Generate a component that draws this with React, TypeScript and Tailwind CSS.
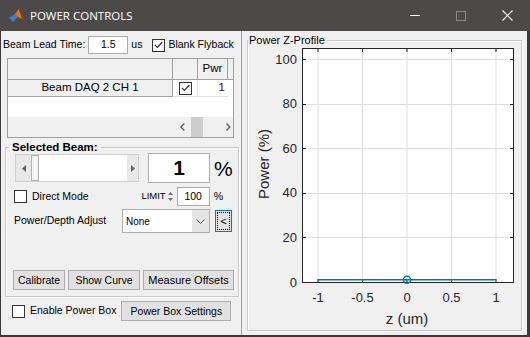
import React from 'react';

const yTicks = [0, 20, 40, 60, 80, 100];
const xTicks = [-1, -0.5, 0, 0.5, 1];
const px = (v: number) => 159 + 89 * v;
const py = (v: number) => 235 - 2.23 * v;

function Check({ checked = false }: { checked?: boolean }) {
	return (
		<span className="flex h-[13px] w-[13px] shrink-0 items-center justify-center border border-[#333333] bg-white">
			{checked && (
				<svg width="9" height="8" viewBox="0 0 9 8">
					<path d="M0.8 3.8 L3.4 6.4 L8.3 1" fill="none" stroke="#333333" strokeWidth="1.2" />
				</svg>
			)}
		</span>
	);
}

function Btn({ children, className = '' }: { children: React.ReactNode; className?: string }) {
	return (
		<button
			type="button"
			className={`flex h-[20px] items-center justify-center border border-[#adadad] bg-[#e1e1e1] text-[10.5px] leading-none text-black ${className}`}
		>
			{children}
		</button>
	);
}

function MatlabIcon() {
	return (
		<svg width="16" height="14" viewBox="0 0 16 14" className="ml-[9px]">
			<polygon points="0,9 6,5 9,8 4,13" fill="#3f7fc4" />
			<polygon points="6,5 10,0 13,10 9,8" fill="#e8761e" />
			<polygon points="10,0 16,12 13,10" fill="#b8331a" />
		</svg>
	);
}

function Plot() {
	return (
		<svg width="273" height="283" viewBox="0 0 273 283" className="block">
			<rect x="54.5" y="1.5" width="211" height="234" fill="#ffffff" />
			{xTicks.map((t) => (
				<line key={`gx${t}`} x1={px(t)} y1="1.5" x2={px(t)} y2="235.5" stroke="#dedede" strokeWidth="1" />
			))}
			{yTicks.map((t) => (
				<line key={`gy${t}`} x1="54.5" y1={Math.round(py(t)) + 0.5} x2="265.5" y2={Math.round(py(t)) + 0.5} stroke="#dedede" strokeWidth="1" />
			))}
			<rect x="54.5" y="1.5" width="211" height="234" fill="none" stroke="#262626" strokeWidth="1" />
			{xTicks.map((t) => (
				<g key={`tx${t}`}>
					<line x1={px(t)} y1="235.5" x2={px(t)} y2="232" stroke="#262626" />
					<line x1={px(t)} y1="1.5" x2={px(t)} y2="5" stroke="#262626" />
					<text x={px(t)} y="255" textAnchor="middle" fontSize="13" fill="#262626">
						{t}
					</text>
				</g>
			))}
			{yTicks.map((t) => (
				<g key={`ty${t}`}>
					<line x1="54.5" y1={Math.round(py(t)) + 0.5} x2="58" y2={Math.round(py(t)) + 0.5} stroke="#262626" />
					<line x1="265.5" y1={Math.round(py(t)) + 0.5} x2="262" y2={Math.round(py(t)) + 0.5} stroke="#262626" />
					<text x="49" y={py(t) + 4.5} textAnchor="end" fontSize="13" fill="#262626">
						{t}
					</text>
				</g>
			))}
			<line x1={px(-1)} y1={py(1)} x2={px(1)} y2={py(1)} stroke="#0072bd" strokeWidth="1.6" />
			<circle cx={px(0)} cy={py(1)} r="3.5" fill="none" stroke="#0072bd" strokeWidth="1.3" />
			<text x="159" y="277" textAnchor="middle" fontSize="15" fill="#262626">
				z (um)
			</text>
			<text x="15" y="117" textAnchor="middle" dominantBaseline="central" fontSize="15" fill="#262626" transform="rotate(-90 15 117)">
				Power (%)
			</text>
		</svg>
	);
}

export default function App() {
	return (
		<div className="flex h-[337px] w-[530px] flex-col bg-[#3a3a3a] font-['Liberation_Sans',Arial,sans-serif] text-[10.5px] text-black">
			{/* title bar */}
			<div className="flex h-[31px] shrink-0 items-center bg-[#4b4a48] text-white">
				<MatlabIcon />
				<span className="ml-[5px] font-['Open_Sans',sans-serif] text-[11.5px]">POWER CONTROLS</span>
				<div className="ml-auto flex h-full">
					<div className="flex h-full w-[46px] items-center justify-center">
						<span className="block h-px w-[10px] bg-white" />
					</div>
					<div className="flex h-full w-[46px] items-center justify-center">
						<span className="block h-[10px] w-[10px] border border-[#8a8a8a]" />
					</div>
					<div className="flex h-full w-[46px] items-center justify-center">
						<svg width="11" height="11" viewBox="0 0 11 11">
							<path d="M0.5 0.5 L10.5 10.5 M10.5 0.5 L0.5 10.5" stroke="#ffffff" strokeWidth="1.1" />
						</svg>
					</div>
				</div>
			</div>

			{/* body */}
			<div className="mb-[2px] ml-px mr-[3px] flex flex-1 bg-[#f0f0f0]">
				{/* left column */}
				<div className="flex w-[241px] shrink-0 flex-col border-r border-[#a0a0a0]">
					<div className="mt-[5px] flex h-[18px] items-center pl-[2px]">
						<span>Beam Lead Time:</span>
						<span className="ml-[3px] flex h-[18px] w-[40px] items-center justify-center border border-[#abadb3] bg-white">1.5</span>
						<span className="ml-[3px]">us</span>
						<span className="ml-[10px]">
							<Check checked />
						</span>
						<span className="ml-[3px]">Blank Flyback</span>
					</div>

					{/* table */}
					<div className="ml-[6px] mt-[4px] flex h-[80px] w-[227px] flex-col border border-[#a0a0a0] text-[11.5px]">
						<div className="flex h-[21px] border-b border-[#a0a0a0]">
							<div className="w-[165px] border-r border-[#a0a0a0]" />
							<div className="w-[25px] border-r border-[#a0a0a0]" />
							<div className="flex w-[30px] items-end justify-center border-r border-[#a0a0a0] pb-[2px]">Pwr</div>
							<div className="flex-1" />
						</div>
						<div className="flex h-[17px]">
							<div className="flex w-[165px] items-center justify-center border-b border-r border-[#a0a0a0]">Beam DAQ 2 CH 1</div>
							<div className="flex w-[25px] items-center justify-center border-b border-r border-[#e0e0e0] bg-white">
								<Check checked />
							</div>
							<div className="flex w-[30px] items-center justify-end border-b border-[#e0e0e0] bg-white pr-[3px] text-[#400040]">1</div>
							<div className="flex-1 bg-white" />
						</div>
						<div className="h-[20px] bg-white" />
						<div className="flex h-[20px] items-center">
							<div className="w-[171px]" />
							<svg width="10" height="10" viewBox="0 0 10 10" className="ml-[2px]">
								<path d="M6.5 1.5 L3 5 L6.5 8.5" fill="none" stroke="#606060" strokeWidth="1.4" />
							</svg>
							<span className="ml-[4px] block h-[20px] w-[12px] bg-[#cdcdcd]" />
							<svg width="10" height="10" viewBox="0 0 10 10" className="ml-[20px]">
								<path d="M3.5 1.5 L7 5 L3.5 8.5" fill="none" stroke="#606060" strokeWidth="1.4" />
							</svg>
						</div>
					</div>

					{/* selected beam */}
					<fieldset className="ml-[4px] mt-[2px] h-[157px] w-[234px] border border-[#c8c8c8] shadow-[inset_1px_1px_0_#ffffff,1px_1px_0_#ffffff]">
						<legend className="ml-[3px] px-[3px] text-[11.5px] font-bold leading-[14px]">Selected Beam:</legend>
						<div className="-mt-px flex h-[30px] items-center pl-[9px]">
							<div className="flex h-[28px] w-[124px] border border-[#d0d0d0] bg-[#e8e8e8]">
								<div className="flex w-[15px] items-center justify-center">
									<svg width="4" height="7" viewBox="0 0 4 7">
										<path d="M4 0 L0 3.5 L4 7 Z" fill="#606060" />
									</svg>
								</div>
								<div className="w-[8px] border border-[#b0b0b0] bg-[#f4f4f4]" />
								<div className="flex-1 bg-white" />
								<div className="flex w-[11px] items-center justify-center">
									<svg width="4" height="7" viewBox="0 0 4 7">
										<path d="M0 0 L4 3.5 L0 7 Z" fill="#606060" />
									</svg>
								</div>
							</div>
							<div className="ml-[9px] flex h-[30px] w-[62px] items-center justify-center border border-[#abadb3] bg-white text-[21px] font-bold">1</div>
							<span className="ml-[4px] text-[21px] leading-none">%</span>
						</div>
						<div className="mt-[4px] flex h-[19px] items-center pl-[8px]">
							<Check />
							<span className="ml-[5px]">Direct Mode</span>
							<span className="ml-auto text-[9.5px]">LIMIT</span>
							<div className="flex h-[16px] w-[10px] flex-col items-center justify-center gap-[3px]">
								<svg width="5" height="3" viewBox="0 0 5 3">
									<path d="M0 3 L2.5 0 L5 3 Z" fill="#707070" />
								</svg>
								<svg width="5" height="3" viewBox="0 0 5 3">
									<path d="M0 0 L2.5 3 L5 0 Z" fill="#707070" />
								</svg>
							</div>
							<span className="ml-px flex h-[19px] w-[33px] items-center justify-center border border-[#abadb3] bg-white">100</span>
							<span className="ml-[4px] mr-[15px]">%</span>
						</div>
						<div className="mt-[3px] flex h-[24px] items-center pl-[8px]">
							<span>Power/Depth Adjust</span>
							<div className="ml-auto flex h-[24px] w-[88px] border border-[#adadad] bg-white">
								<span className="flex flex-1 items-center pl-[3px] text-[10px]">None</span>
								<span className="flex w-[17px] items-center justify-center bg-[#e5e5e5]">
									<svg width="9" height="5" viewBox="0 0 9 5">
										<path d="M0.5 0.5 L4.5 4.5 L8.5 0.5" fill="none" stroke="#555555" />
									</svg>
								</span>
							</div>
							<button
								type="button"
								className="ml-[5px] mr-[6px] flex h-[22px] w-[17px] items-center justify-center border border-[#0078d7] bg-[#e1e1e1] p-px"
							>
								<span className="flex h-full w-full items-center justify-center border border-dotted border-black leading-none">&lt;</span>
							</button>
						</div>
						<div className="mt-[37px] flex gap-[3px] pl-[7px]">
							<Btn className="w-[52px]">Calibrate</Btn>
							<Btn className="w-[72px]">Show Curve</Btn>
							<Btn className="w-[91px] text-[11px]">Measure Offsets</Btn>
						</div>
					</fieldset>

					<div className="mt-[4px] flex h-[20px] items-center pl-[11px]">
						<Check />
						<span className="ml-[5px]">Enable Power Box</span>
						<Btn className="ml-[5px] w-[110px]">Power Box Settings</Btn>
					</div>
				</div>

				{/* right column */}
				<div className="flex-1">
					<fieldset className="ml-[5px] mt-[2px] h-[298px] w-[275px] border border-[#c8c8c8] shadow-[inset_1px_1px_0_#ffffff,1px_1px_0_#ffffff]">
						<legend className="px-px text-[11px] leading-[14px]">Power Z-Profile</legend>
						<Plot />
					</fieldset>
				</div>
			</div>
		</div>
	);
}
